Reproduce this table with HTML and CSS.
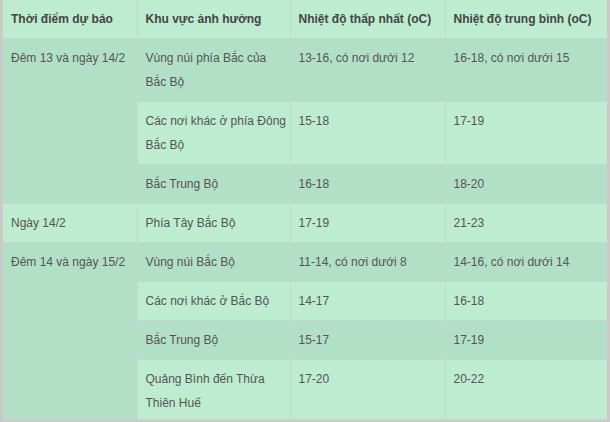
FILE: index.html
```html
<!DOCTYPE html>
<html lang="vi">
<head>
<meta charset="utf-8">
<link rel="stylesheet" href="styles.css">
</head>
<body>
<div class="frame">
<table class="forecast">
  <colgroup>
    <col class="c1"><col class="c2"><col class="c3"><col class="c4">
  </colgroup>
  <thead>
    <tr>
      <th>Thời điểm dự báo</th>
      <th>Khu vực ảnh hưởng</th>
      <th>Nhiệt độ thấp nhất (oC)</th>
      <th>Nhiệt độ trung bình (oC)</th>
    </tr>
  </thead>
  <tbody>
    <tr class="dark">
      <td rowspan="3">Đêm 13 và ngày 14/2</td>
      <td>Vùng núi phía Bắc của Bắc Bộ</td>
      <td>13-16, có nơi dưới 12</td>
      <td>16-18, có nơi dưới 15</td>
    </tr>
    <tr class="light">
      <td>Các nơi khác ở phía Đông Bắc Bộ</td>
      <td>15-18</td>
      <td>17-19</td>
    </tr>
    <tr class="dark">
      <td>Bắc Trung Bộ</td>
      <td>16-18</td>
      <td>18-20</td>
    </tr>
    <tr class="light">
      <td>Ngày 14/2</td>
      <td>Phía Tây Bắc Bộ</td>
      <td>17-19</td>
      <td>21-23</td>
    </tr>
    <tr class="dark">
      <td rowspan="4">Đêm 14 và ngày 15/2</td>
      <td>Vùng núi Bắc Bộ</td>
      <td>11-14, có nơi dưới 8</td>
      <td>14-16, có nơi dưới 14</td>
    </tr>
    <tr class="light">
      <td>Các nơi khác ở Bắc Bộ</td>
      <td>14-17</td>
      <td>16-18</td>
    </tr>
    <tr class="dark">
      <td>Bắc Trung Bộ</td>
      <td>15-17</td>
      <td>17-19</td>
    </tr>
    <tr class="light last">
      <td>Quảng Bình đến Thừa Thiên Huế</td>
      <td>17-20</td>
      <td>20-22</td>
    </tr>
  </tbody>
</table>
</div>
</body>
</html>
```

FILE: styles.css
```css
html, body {
  margin: 0;
  padding: 0;
  background: #ffffff;
}
.frame {
  width: 610px;
  height: 422px;
  box-sizing: border-box;
  background: #cacaca;
  padding: 0 3px 0 3px;
  overflow: hidden;
}
.forecast {
  width: 604px;
  border-collapse: collapse;
  table-layout: fixed;
  font-family: "Liberation Sans", Arial, sans-serif;
  font-size: 12px;
  color: #555555;
  background: #bdecd1;
}
.c1 { width: 134px; }
.c2 { width: 153px; }
.c3 { width: 155px; }
.c4 { width: 162px; }
.forecast th,
.forecast td {
  text-align: left;
  vertical-align: top;
  padding: 7px 3px 7px 8px;
  line-height: 24px;
  border: 1px solid #c6d6cb;
}
.forecast thead tr:first-child th {
  border-top: none;
}
.forecast th {
  font-weight: bold;
  color: #444444;
  background: #bdecd1;
}
.forecast tr th:first-child,
.forecast tr td:first-child {
  border-left: none;
}
.forecast th:last-child,
.forecast td:last-child {
  border-right: none;
}
.forecast tr.dark td {
  background: #b2e0c7;
}
.forecast tr.light td {
  background: #bdecd1;
}
.forecast tr.last td {
  padding-bottom: 4px;
}
```
